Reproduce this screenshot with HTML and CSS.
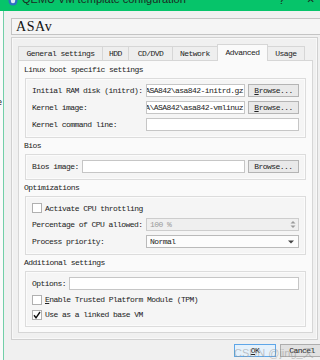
FILE: index.html
```html
<!DOCTYPE html>
<html lang="en">
<head>
    <meta charset="UTF-8">
    <title>QEMU VM template configuration</title>
    <link rel="stylesheet" href="styles.css">
</head>
<body>
    <!-- Title bar -->
    <div class="titlebar">
        <svg class="app-icon" width="10" height="10" viewBox="0 0 10 10">
            <circle cx="5" cy="5" r="4.5" fill="#2f6fc4"/>
            <circle cx="5" cy="5" r="2.2" fill="#dfe9f7"/>
        </svg>
        <span class="title">QEMU VM template configuration</span>
        <span class="tb-help">?</span>
        <span class="tb-close">✕</span>
    </div>

    <div class="main">
        <div class="edge"><span>e</span></div>

        <div class="dialog">
            <div class="name-box">ASAv</div>

            <div class="tabwidget">
                <div class="tabbar">
                    <div class="tab tab-general">General settings</div>
                    <div class="tab tab-hdd">HDD</div>
                    <div class="tab tab-cd">CD/DVD</div>
                    <div class="tab tab-net">Network</div>
                    <div class="tab tab-adv active">Advanced</div>
                    <div class="tab tab-usage">Usage</div>
                </div>

                <div class="pane">
                    <!-- Linux boot -->
                    <div class="group-title">Linux boot specific settings</div>
                    <div class="frame">
                        <div class="row">
                            <span class="label">Initial RAM disk (initrd):</span>
                            <div class="field path"><span>C:\images\ASA842\asa842-initrd.gz</span></div>
                            <button class="browse"><u>B</u>rowse...</button>
                        </div>
                        <div class="row">
                            <span class="label">Kernel image:</span>
                            <div class="field path"><span>C:\images\A\ASA842\asa842-vmlinuz</span></div>
                            <button class="browse"><u>B</u>rowse...</button>
                        </div>
                        <div class="row">
                            <span class="label">Kernel command line:</span>
                            <div class="field"></div>
                        </div>
                    </div>

                    <!-- Bios -->
                    <div class="group-title">Bios</div>
                    <div class="frame">
                        <div class="row">
                            <span class="label-auto">Bios image:</span>
                            <div class="field"></div>
                            <button class="browse">Browse...</button>
                        </div>
                    </div>

                    <!-- Optimizations -->
                    <div class="group-title">Optimizations</div>
                    <div class="frame">
                        <div class="row check-row">
                            <span class="checkbox"></span>
                            <span>Activate CPU throttling</span>
                        </div>
                        <div class="row">
                            <span class="label">Percentage of CPU allowed:</span>
                            <div class="field spin">
                                <span class="spin-value">100 %</span>
                                <svg class="spin-arrows" width="6" height="9" viewBox="0 0 6 9">
                                    <path d="M0.5 3.5 L3 1 L5.5 3.5 Z" fill="#9a9a9a"/>
                                    <path d="M0.5 5.5 L3 8 L5.5 5.5 Z" fill="#9a9a9a"/>
                                </svg>
                            </div>
                        </div>
                        <div class="row">
                            <span class="label">Process priority:</span>
                            <div class="field combo">
                                <span>Normal</span>
                                <svg class="combo-arrow" width="6" height="4" viewBox="0 0 6 4">
                                    <path d="M0 0.5 L6 0.5 L3 3.5 Z" fill="#444"/>
                                </svg>
                            </div>
                        </div>
                    </div>

                    <!-- Additional -->
                    <div class="group-title">Additional settings</div>
                    <div class="frame">
                        <div class="row">
                            <span class="label-auto">Options:</span>
                            <div class="field"></div>
                        </div>
                        <div class="row check-row">
                            <span class="checkbox"></span>
                            <span><u>E</u>nable Trusted Platform Module (TPM)</span>
                        </div>
                        <div class="row check-row">
                            <span class="checkbox">
                                <svg width="8" height="8" viewBox="0 0 8 8">
                                    <path d="M1 4.2 L3 6.8 L7 1" fill="none" stroke="#111" stroke-width="1.4"/>
                                </svg>
                            </span>
                            <span>Use as a linked base VM</span>
                        </div>
                    </div>
                </div>
            </div>

            <div class="buttons">
                <button class="btn btn-ok"><u>O</u>K</button>
                <button class="btn">Cancel</button>
            </div>
        </div>
    </div>

    <div class="watermark">CSDN @jing_天天</div>
</body>
</html>
```

FILE: styles.css
```css
body {
    margin: 0;
    width: 320px;
    height: 360px;
    overflow: hidden;
    position: relative;
    background-color: #f9f9f9;
    font-family: "Liberation Mono", monospace;
    font-size: 8px;
    letter-spacing: -0.55px;
    color: #222;
}

/* title bar */
.titlebar {
    height: 11px;
    background-color: #06c46a;
    display: flex;
    align-items: flex-start;
    overflow: hidden;
    white-space: nowrap;
}
.app-icon {
    flex-shrink: 0;
    margin: -4px 0 0 8px;
}
.title {
    flex-shrink: 0;
    margin: -7px 0 0 4px;
    font-family: "Liberation Sans", sans-serif;
    font-size: 11px;
    letter-spacing: 0;
    color: #1c2a22;
}
.tb-help {
    margin: -6px 0 0 auto;
    font-family: "Liberation Sans", sans-serif;
    font-size: 11px;
    letter-spacing: 0;
    color: #1c2a22;
}
.tb-close {
    margin: -6px 5px 0 22px;
    font-family: "DejaVu Sans", sans-serif;
    font-size: 10px;
    letter-spacing: 0;
    color: #1c2a22;
}

.main {
    display: flex;
    height: 349px;
}
.edge {
    width: 3px;
    flex-shrink: 0;
    background-color: #fafafa;
    border-right: 1px solid #72cfa8;
    overflow: hidden;
}
.edge span {
    display: block;
    margin: 86px 0 0 -3px;
    font-family: "Liberation Sans", sans-serif;
    font-size: 9px;
    color: #222;
}

.dialog {
    flex: 1;
    background-color: #f0f0f0;
    padding: 7px 0 0 7px;
    min-width: 0;
    overflow: hidden;
}

.name-box {
    box-sizing: border-box;
    width: 312px;
    height: 17px;
    border: 1px solid #c4c4c4;
    border-right: none;
    background-color: #f5f5f5;
    padding-left: 4px;
    font-family: "Liberation Serif", serif;
    font-size: 14px;
    line-height: 16px;
    letter-spacing: 0.6px;
    color: #111;
}

/* tab widget */
.tabwidget {
    box-sizing: border-box;
    width: 307px;
    margin-top: 2px;
    border: 1px solid #d0d0d0;
    box-shadow: inset 0 0 0 1px #f8f8f8;
    padding: 6px 4px 6px 6px;
}
.tabbar {
    display: flex;
    align-items: flex-end;
    height: 16px;
}
.tab {
    box-sizing: border-box;
    height: 14px;
    line-height: 13px;
    text-align: center;
    border: 1px solid #d6d6d6;
    border-bottom: none;
    background-color: #eeeeee;
    margin-right: -1px;
}
.tab.active {
    height: 17px;
    line-height: 15px;
    background-color: #fafafa;
    margin-bottom: -1px;
    position: relative;
}
.tab-general { width: 85px; }
.tab-hdd { width: 27px; }
.tab-cd { width: 45px; }
.tab-net { width: 46px; }
.tab-adv { width: 51px; }
.tab-usage { width: 38px; }

.pane {
    box-sizing: border-box;
    width: 295px;
    height: 273px;
    border: 1px solid #d6d6d6;
    background-color: #fafafa;
    padding: 1px 6px 0 6px;
}

.group-title {
    height: 16px;
    line-height: 16px;
    margin-left: -1px;
}
.frame {
    border: 1px solid #dcdcdc;
    background-color: #f5f5f5;
    box-shadow: inset 0 0 0 1px #fbfbfb;
    padding: 5px 6px 6px 6px;
    display: flex;
    flex-direction: column;
    gap: 4px;
}

.row {
    display: flex;
    align-items: center;
    height: 13px;
}
.label {
    width: 114px;
    flex-shrink: 0;
    white-space: nowrap;
}
.label-auto {
    margin-right: 3px;
    white-space: nowrap;
}

.field {
    box-sizing: border-box;
    flex: 1;
    min-width: 0;
    height: 13px;
    border: 1px solid #c6c6c6;
    background-color: #fff;
    display: flex;
    align-items: center;
    overflow: hidden;
    white-space: nowrap;
    padding: 0 1px;
}
.field.path {
    justify-content: flex-end;
}

.browse {
    box-sizing: border-box;
    width: 51px;
    height: 13px;
    margin-left: 3px;
    padding: 0;
    border: 1px solid #b4b4b4;
    background-color: #e9e9e9;
    font-family: "Liberation Mono", monospace;
    font-size: 8px;
    letter-spacing: -0.55px;
    color: #222;
}

.check-row {
    height: 11px;
}
.check-row:first-child {
    height: 12px;
}
.checkbox {
    box-sizing: border-box;
    width: 10px;
    height: 10px;
    border: 1px solid #b0b0b0;
    background-color: #fff;
    margin-right: 3px;
    display: flex;
    align-items: center;
    justify-content: center;
}

.spin {
    background-color: #efefef;
    border-color: #cdcdcd;
    justify-content: space-between;
    padding: 0 2px 0 3px;
}
.spin-value {
    color: #9a9a9a;
}
.combo {
    background-color: #fcfcfc;
    border-color: #bababa;
    justify-content: space-between;
    padding: 0 4px 0 3px;
}

.buttons {
    width: 313px;
    margin-top: 4px;
    display: flex;
    justify-content: flex-end;
    gap: 4px;
}
.btn {
    box-sizing: border-box;
    flex-shrink: 0;
    width: 44px;
    height: 13px;
    padding: 0;
    border: 1px solid #adadad;
    background-color: #e1e1e1;
    font-family: "Liberation Mono", monospace;
    font-size: 8px;
    letter-spacing: -0.55px;
    color: #222;
}
.btn-ok {
    width: 42px;
    border-color: #5ea6e8;
    background-color: #e5f1fb;
}

.watermark {
    position: absolute;
    left: 234px;
    top: 344px;
    font-family: "Liberation Sans", "Noto Sans CJK SC", sans-serif;
    font-size: 11px;
    letter-spacing: 0;
    color: rgba(150, 150, 150, 0.55);
}
```
